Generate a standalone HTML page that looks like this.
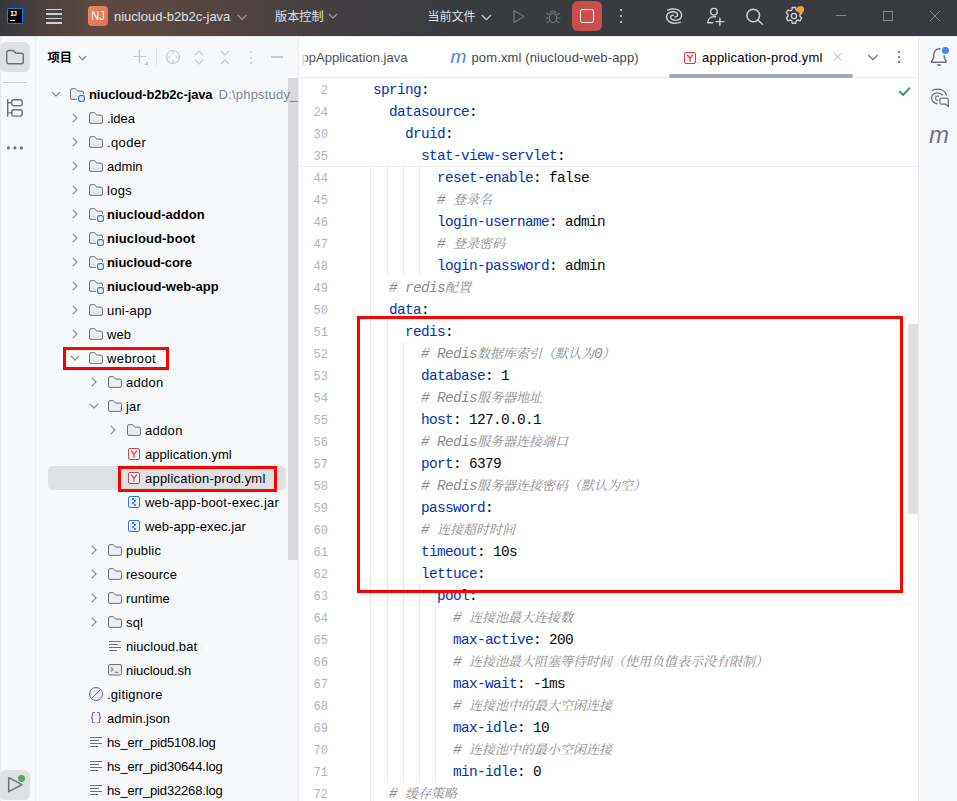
<!DOCTYPE html>
<html lang="zh"><head><meta charset="utf-8"><title>niucloud-b2b2c-java – application-prod.yml</title>
<style>
*{box-sizing:border-box;margin:0;padding:0}
html,body{width:957px;height:801px;overflow:hidden;background:#fff}
body{position:relative;font-family:"Liberation Sans","Noto Sans CJK SC",sans-serif;font-size:13px;color:#000}
.abs{position:absolute}
#title{left:0;top:0;width:957px;height:36px;background:linear-gradient(90deg,#38383c 0px,#4b413f 40px,#5e493f 95px,#5a4740 160px,#4d4241 260px,#403e42 360px,#393b40 450px,#393b40 957px);color:#dfe1e5}
#title .t{position:absolute;top:0;line-height:34px;font-size:13px;white-space:nowrap;color:#dfe1e5}
#lstripe{left:0;top:36px;width:36px;height:765px;background:#f7f8fa;border-right:1px solid #ebecf0}
#proj{left:36px;top:36px;width:262px;height:765px;background:#f7f8fa;overflow:hidden}
#projborder{left:298px;top:36px;width:1px;height:765px;background:#ebecf0}
#editor{left:299px;top:36px;width:619px;height:765px;background:#fff;overflow:hidden}
#rstripe{left:918px;top:36px;width:39px;height:765px;background:#f7f8fa;border-left:1px solid #ebecf0}
.row{position:absolute;left:0;height:24px;line-height:23px;white-space:nowrap;font-size:13px;color:#000}
.row b{font-weight:bold}
.ln{position:absolute;left:299px;width:29px;text-align:right;font-family:"Liberation Mono","Noto Sans CJK SC",monospace;font-size:12px;line-height:27px;height:22px;color:#aeb3c2}
.cl{position:absolute;font-family:"Liberation Mono","Noto Sans CJK SC",monospace;font-size:14.400px;letter-spacing:-.640px;line-height:25px;height:22px;white-space:pre;color:#080808}
.k{color:#0033b3}
.c{color:#8c8c8c;font-style:italic;font-family:"Liberation Mono","Noto Serif CJK SC",monospace}
.c i{font-size:13px;letter-spacing:0}
.guide{position:absolute;width:1px;background:#e6e7ec}
.red{position:absolute;border:3px solid #ff0000}
svg{position:absolute;overflow:visible}
</style></head>
<body>
<div id="title" class="abs">
<div class="abs" style="left:7px;top:8px;width:16px;height:16px;background:#000;border:1px solid #087cfa;border-radius:1px"></div>
<div class="abs" style="left:10px;top:10.500px;font:bold 7px/7px 'Liberation Mono',monospace;color:#fff;letter-spacing:-1.200px">IJ</div>
<div class="abs" style="left:10px;top:19.500px;width:5px;height:1.200px;background:#fff"></div>
<div class="abs" style="left:46px;top:8.5px;width:16px;height:1.500px;background:#ced0d6"></div>
<div class="abs" style="left:46px;top:13px;width:16px;height:1.500px;background:#ced0d6"></div>
<div class="abs" style="left:46px;top:17.5px;width:16px;height:1.500px;background:#ced0d6"></div>
<div class="abs" style="left:46px;top:22px;width:16px;height:1.500px;background:#ced0d6"></div>
<div class="abs" style="left:88px;top:6px;width:20px;height:20px;border-radius:4px;background:linear-gradient(135deg,#e98a63,#df7058)"></div>
<div class="abs" style="left:88px;top:6px;width:20px;height:20px;line-height:20px;text-align:center;font-size:13px;color:#fff;transform:scaleX(.85)">NJ</div>
<div class="t" style="left:114px">niucloud-b2b2c-java</div>
<svg style="left:236.500px;top:13.500px" width="11" height="7" viewBox="0 0 11 7"><path d="M.700 1l4.400 4.400 4.400-4.400" fill="none" stroke="#9da0a8" stroke-width="1.200"/></svg>
<div class="t" style="left:275px;font-size:12.200px;line-height:35.500px">版本控制</div>
<svg style="left:328px;top:13px" width="10" height="6" viewBox="0 0 10 6"><path d="M1 1l4 4 4-4" fill="none" stroke="#9da0a8" stroke-width="1.2"/></svg>
<div class="t" style="left:427.500px;font-size:12px;line-height:35.500px">当前文件</div>
<svg style="left:480.500px;top:13.500px" width="11" height="7" viewBox="0 0 11 7"><path d="M.700 1l4.600 4.600 4.600-4.600" fill="none" stroke="#ced0d6" stroke-width="1.200"/></svg>
<svg style="left:512px;top:9px" width="14" height="16" viewBox="0 0 14 16"><path d="M2 1.5v12l10-6z" fill="none" stroke="#6f737a" stroke-width="1.3" stroke-linejoin="round"/></svg>
<svg style="left:544px;top:8px" width="18" height="18" viewBox="0 0 18 18"><g fill="none" stroke="#6f737a" stroke-width="1.2"><ellipse cx="9" cy="10" rx="3.6" ry="4.6"/><path d="M6.5 5.5a2.5 2.5 0 015 0M1.5 10h4M12.500 10h4M2.5 5l3.300 2.300M15.500 5l-3.300 2.300M2.500 15l3.300-2.300M15.500 15l-3.300-2.300"/></g></svg>
<div class="abs" style="left:572px;top:1px;width:30px;height:30px;border-radius:6px;background:#c94f4f"></div>
<div class="abs" style="left:580px;top:9px;width:14px;height:14px;border-radius:2.500px;border:1.500px solid #fff"></div>
<div class="abs" style="left:620px;top:9px;width:2px;height:2px;border-radius:1px;background:#dfe1e5"></div>
<div class="abs" style="left:620px;top:15px;width:2px;height:2px;border-radius:1px;background:#dfe1e5"></div>
<div class="abs" style="left:620px;top:21px;width:2px;height:2px;border-radius:1px;background:#dfe1e5"></div>
<svg style="left:664px;top:6px" width="20" height="20" viewBox="0 0 20 20"><g fill="none" stroke="#ced0d6" stroke-width="1.500" stroke-linecap="round" transform="translate(10.100 10.070) scale(.940) translate(-10.100 -10.070)"><path d="M16.84 16.50C16.13 16.68 13.98 17.41 12.60 17.57C11.21 17.73 9.81 17.71 8.53 17.44C7.25 17.17 5.84 16.60 4.90 15.97C3.96 15.34 3.37 14.57 2.90 13.67C2.43 12.77 1.94 11.64 2.10 10.54C2.25 9.44 2.76 7.93 3.83 7.09C4.90 6.25 7.12 5.62 8.53 5.52C9.94 5.42 11.41 5.95 12.30 6.47C13.19 6.99 13.76 7.98 13.86 8.66C13.96 9.34 13.37 10.15 12.90 10.54C12.43 10.93 11.35 10.93 11.04 11.01"/><path d="M3.36 3.64C4.07 3.46 6.21 2.73 7.60 2.57C8.98 2.41 10.39 2.43 11.67 2.70C12.95 2.97 14.36 3.54 15.30 4.17C16.24 4.80 16.83 5.57 17.30 6.47C17.77 7.38 18.26 8.50 18.10 9.60C17.95 10.70 17.44 12.21 16.37 13.05C15.30 13.89 13.08 14.52 11.67 14.62C10.26 14.72 8.79 14.19 7.90 13.67C7.01 13.15 6.44 12.16 6.34 11.48C6.24 10.80 6.83 9.99 7.30 9.60C7.77 9.21 8.85 9.21 9.16 9.13"/></g></svg>
<svg style="left:704px;top:6px" width="22" height="22" viewBox="0 0 22 22"><g fill="none" stroke="#ced0d6" stroke-width="1.400" stroke-linecap="round" stroke-linejoin="round"><circle cx="9.900" cy="5.700" r="3.300"/><path d="M8.700 16.800H3.700c0-3.600 2.600-6 6.200-6h1.600"/><path d="M15.900 12.100v7.400M12.100 15.600h7.800"/></g></svg>
<svg style="left:744px;top:7px" width="20" height="20" viewBox="0 0 20 20"><g fill="none" stroke="#ced0d6" stroke-width="1.500" stroke-linecap="round"><circle cx="9.260" cy="8.470" r="6.300"/><path d="M13.800 13l4.600 4.200"/></g></svg>
<svg style="left:784px;top:6px" width="20" height="20" viewBox="0 0 20 20"><g fill="none" stroke="#ced0d6" stroke-width="1.400" stroke-linejoin="round"><path d="M8.300 1.500h3.400l.5 2.400 1.500.9 2.300-.8 1.700 2.900-1.800 1.600v1.800l1.800 1.600-1.700 2.900-2.300-.8-1.500.9-.5 2.400H8.300l-.5-2.400-1.500-.9-2.300.8-1.700-2.900 1.800-1.600V8.500L2.300 6.900 4 4l2.300.8 1.500-.9z"/><circle cx="10" cy="10" r="2.600"/></g></svg>
<div class="abs" style="left:797px;top:6px;width:7px;height:7px;border-radius:4px;background:#f2a337"></div>
<div class="abs" style="left:836px;top:15px;width:10px;height:1px;background:#85888f"></div>
<div class="abs" style="left:883px;top:11px;width:10px;height:10px;border:1px solid #85888f"></div>
<svg style="left:930px;top:11px" width="10" height="10" viewBox="0 0 10 10"><path d="M0 0l10 10M10 0l-10 10" stroke="#85888f" stroke-width="1"/></svg>
</div>
<div class="abs" style="left:0;top:36px;width:957px;height:1px;background:#ebecf0;z-index:3"></div>
<div id="lstripe" class="abs"></div>
<div class="abs" style="left:0;top:36px;width:2px;height:765px;background:linear-gradient(90deg,#e6e7ea,#f7f8fa)"></div>
<div class="abs" style="left:0;top:42px;width:30px;height:30px;border-radius:6px;background:#dfe0e4"></div>
<svg style="left:5px;top:49px" width="20" height="16" viewBox="0 0 20 16"><path d="M1.700 3.500a2 2 0 012-2h4c.6 0 1.100.300 1.500.700l1.700 2h5.400a2 2 0 012 2v6.600a2 2 0 01-2 2h-12.600a2 2 0 01-2-2z" fill="none" stroke="#6c707e" stroke-width="1.400" stroke-linejoin="round"/></svg>
<div class="abs" style="left:3px;top:82px;width:24px;height:1px;background:#c9ccd6"></div>
<svg style="left:6px;top:98px" width="18" height="20" viewBox="0 0 18 20"><g fill="none" stroke="#6c707e" stroke-width="1.400"><path d="M1.700 1.060v17.740"/><rect x="5.800" y="1.760" width="10.400" height="6.040" rx="2"/><rect x="5.800" y="11.800" width="10.400" height="6.300" rx="2"/><path d="M1.700 4.800h4.100M1.700 14.900h4.100"/></g></svg>
<svg style="left:0;top:140px" width="36" height="16" viewBox="0 0 36 16"><g fill="#6c707e"><circle cx="8.500" cy="7.900" r="1.550"/><circle cx="14.900" cy="7.900" r="1.550"/><circle cx="21.500" cy="7.900" r="1.550"/></g></svg>
<div class="abs" style="left:0;top:770px;width:30px;height:30px;border-radius:6px;background:#dfe0e4"></div>
<svg style="left:7px;top:776px" width="17" height="18" viewBox="0 0 17 18"><path d="M1.700 1.700v14l13.300-7z" fill="none" stroke="#6c707e" stroke-width="1.500" stroke-linejoin="round"/></svg>
<div class="abs" style="left:18px;top:775px;width:7px;height:7px;border-radius:4px;background:#55a76a;border:0"></div>
<div id="proj" class="abs"></div><div id="projborder" class="abs"></div>
<div class="abs" style="left:47.500px;top:47px;font-size:12.200px;line-height:22px;font-weight:bold;color:#000">项目</div>
<svg style="left:78px;top:55px" width="9" height="6" viewBox="0 0 9 6"><path d="M.8 1l3.700 3.700L8.200 1" fill="none" stroke="#818594" stroke-width="1.100"/></svg>
<svg style="left:133px;top:50px" width="16" height="16" viewBox="0 0 16 16"><path d="M6.500 0v13M0 6.500h13" stroke="#c6c9d3" stroke-width="1.200" fill="none"/><path d="M15 11v4h-4z" fill="#c6c9d3"/></svg>
<div class="abs" style="left:156px;top:47px;width:1px;height:20px;background:#e3e4e8"></div>
<svg style="left:165px;top:49px" width="16" height="16" viewBox="0 0 16 16"><g fill="none" stroke="#c6c9d3" stroke-width="1.200"><circle cx="8" cy="8" r="6.500"/><path d="M8 1.500v3.500M8 11v3.500M1.500 8h3.500M11 8h3.500"/></g></svg>
<svg style="left:194px;top:50px" width="10" height="15" viewBox="0 0 10 15"><path d="M1 5l4-4 4 4M1 10l4 4 4-4" fill="none" stroke="#c6c9d3" stroke-width="1.200"/></svg>
<svg style="left:220px;top:50px" width="10" height="15" viewBox="0 0 10 15"><path d="M1 1l4 4 4-4M1 14l4-4 4 4" fill="none" stroke="#c6c9d3" stroke-width="1.200"/></svg>
<div class="abs" style="left:250px;top:51px;width:2.200px;height:2.200px;border-radius:1px;background:#c6c9d3"></div>
<div class="abs" style="left:250px;top:56.5px;width:2.200px;height:2.200px;border-radius:1px;background:#c6c9d3"></div>
<div class="abs" style="left:250px;top:62px;width:2.200px;height:2.200px;border-radius:1px;background:#c6c9d3"></div>
<div class="abs" style="left:270.800px;top:56.300px;width:12.500px;height:1.400px;background:#c6c9d3"></div>
<div class="abs" style="left:48px;top:466px;width:238px;height:24px;border-radius:5px;background:#dfe0e4"></div>
<div class="abs" style="left:0;top:0;width:298px;height:801px;overflow:hidden">
<div class="row" style="left:218.600px;top:83px;color:#818594;letter-spacing:.200px">D:\phpstudy_pro\WWW</div>
<svg style="left:51px;top:91px" width="10" height="6" viewBox="0 0 10 6"><path d="M.8.800L5 5 9.200.800" fill="none" stroke="#818594" stroke-width="1.100"/></svg>
<svg style="left:69px;top:86px" width="17" height="17" viewBox="0 0 17 17"><path d="M1.500 4.200a1.500 1.500 0 011.500-1.500h3.200c.5 0 .9.200 1.200.600l1.300 1.800h4.300a1.500 1.500 0 011.500 1.500v5.300a1.500 1.500 0 01-1.500 1.500h-10a1.500 1.500 0 01-1.500-1.500z" fill="#ebecf0" stroke="#6c707e" stroke-width="1"/><rect x="8" y="8" width="9" height="9" fill="#f7f8fa"/><rect x="9.600" y="9.600" width="5.800" height="5.800" rx="1.600" fill="#e7effd" stroke="#3574f0" stroke-width="1.200"/></svg>
<div class="row" style="left:89px;top:83px"><b style="letter-spacing:-0.116px">niucloud-b2b2c-java</b></div>
<svg style="left:72px;top:113px" width="6" height="10" viewBox="0 0 6 10"><path d="M.8.800L5 5 .8 9.200" fill="none" stroke="#818594" stroke-width="1.100"/></svg>
<svg style="left:88px;top:110px" width="17" height="17" viewBox="0 0 17 17"><path d="M1.500 4.200a1.500 1.500 0 011.500-1.500h3.200c.5 0 .9.200 1.200.600l1.300 1.800h4.300a1.500 1.500 0 011.500 1.500v5.300a1.500 1.500 0 01-1.500 1.500h-10a1.500 1.500 0 01-1.500-1.500z" fill="#ebecf0" stroke="#6c707e" stroke-width="1"/></svg>
<div class="row" style="left:107px;top:107px"><span style="letter-spacing:-0.081px">.idea</span></div>
<svg style="left:72px;top:137px" width="6" height="10" viewBox="0 0 6 10"><path d="M.8.800L5 5 .8 9.200" fill="none" stroke="#818594" stroke-width="1.100"/></svg>
<svg style="left:88px;top:134px" width="17" height="17" viewBox="0 0 17 17"><path d="M1.500 4.200a1.500 1.500 0 011.500-1.500h3.200c.5 0 .9.200 1.200.600l1.300 1.800h4.300a1.500 1.500 0 011.500 1.500v5.300a1.500 1.500 0 01-1.500 1.500h-10a1.500 1.500 0 01-1.500-1.500z" fill="#ebecf0" stroke="#6c707e" stroke-width="1"/></svg>
<div class="row" style="left:107px;top:131px"><span style="letter-spacing:0.371px">.qoder</span></div>
<svg style="left:72px;top:161px" width="6" height="10" viewBox="0 0 6 10"><path d="M.8.800L5 5 .8 9.200" fill="none" stroke="#818594" stroke-width="1.100"/></svg>
<svg style="left:88px;top:158px" width="17" height="17" viewBox="0 0 17 17"><path d="M1.500 4.200a1.500 1.500 0 011.500-1.500h3.200c.5 0 .9.200 1.200.600l1.300 1.800h4.300a1.500 1.500 0 011.500 1.500v5.300a1.500 1.500 0 01-1.500 1.500h-10a1.500 1.500 0 01-1.500-1.500z" fill="#ebecf0" stroke="#6c707e" stroke-width="1"/></svg>
<div class="row" style="left:107px;top:155px"><span style="letter-spacing:0.036px">admin</span></div>
<svg style="left:72px;top:185px" width="6" height="10" viewBox="0 0 6 10"><path d="M.8.800L5 5 .8 9.200" fill="none" stroke="#818594" stroke-width="1.100"/></svg>
<svg style="left:88px;top:182px" width="17" height="17" viewBox="0 0 17 17"><path d="M1.500 4.200a1.500 1.500 0 011.500-1.500h3.200c.5 0 .9.200 1.200.600l1.300 1.800h4.300a1.500 1.500 0 011.500 1.500v5.300a1.500 1.500 0 01-1.500 1.500h-10a1.500 1.500 0 01-1.500-1.500z" fill="#ebecf0" stroke="#6c707e" stroke-width="1"/></svg>
<div class="row" style="left:107px;top:179px"><span style="letter-spacing:0.285px">logs</span></div>
<svg style="left:72px;top:209px" width="6" height="10" viewBox="0 0 6 10"><path d="M.8.800L5 5 .8 9.200" fill="none" stroke="#818594" stroke-width="1.100"/></svg>
<svg style="left:88px;top:206px" width="17" height="17" viewBox="0 0 17 17"><path d="M1.500 4.200a1.500 1.500 0 011.500-1.500h3.200c.5 0 .9.200 1.200.600l1.300 1.800h4.300a1.500 1.500 0 011.500 1.500v5.300a1.500 1.500 0 01-1.500 1.500h-10a1.500 1.500 0 01-1.500-1.500z" fill="#ebecf0" stroke="#6c707e" stroke-width="1"/><rect x="8" y="8" width="9" height="9" fill="#f7f8fa"/><rect x="9.600" y="9.600" width="5.800" height="5.800" rx="1.600" fill="#e7effd" stroke="#3574f0" stroke-width="1.200"/></svg>
<div class="row" style="left:107px;top:203px"><b style="letter-spacing:0.015px">niucloud-addon</b></div>
<svg style="left:72px;top:233px" width="6" height="10" viewBox="0 0 6 10"><path d="M.8.800L5 5 .8 9.200" fill="none" stroke="#818594" stroke-width="1.100"/></svg>
<svg style="left:88px;top:230px" width="17" height="17" viewBox="0 0 17 17"><path d="M1.500 4.200a1.500 1.500 0 011.500-1.500h3.200c.5 0 .9.200 1.200.600l1.300 1.800h4.300a1.500 1.500 0 011.500 1.500v5.300a1.500 1.500 0 01-1.500 1.500h-10a1.500 1.500 0 01-1.500-1.500z" fill="#ebecf0" stroke="#6c707e" stroke-width="1"/><rect x="8" y="8" width="9" height="9" fill="#f7f8fa"/><rect x="9.600" y="9.600" width="5.800" height="5.800" rx="1.600" fill="#e7effd" stroke="#3574f0" stroke-width="1.200"/></svg>
<div class="row" style="left:107px;top:227px"><b style="letter-spacing:0.12px">niucloud-boot</b></div>
<svg style="left:72px;top:257px" width="6" height="10" viewBox="0 0 6 10"><path d="M.8.800L5 5 .8 9.200" fill="none" stroke="#818594" stroke-width="1.100"/></svg>
<svg style="left:88px;top:254px" width="17" height="17" viewBox="0 0 17 17"><path d="M1.500 4.200a1.500 1.500 0 011.500-1.500h3.200c.5 0 .9.200 1.200.600l1.300 1.800h4.300a1.500 1.500 0 011.500 1.500v5.300a1.500 1.500 0 01-1.500 1.500h-10a1.500 1.500 0 01-1.500-1.500z" fill="#ebecf0" stroke="#6c707e" stroke-width="1"/><rect x="8" y="8" width="9" height="9" fill="#f7f8fa"/><rect x="9.600" y="9.600" width="5.800" height="5.800" rx="1.600" fill="#e7effd" stroke="#3574f0" stroke-width="1.200"/></svg>
<div class="row" style="left:107px;top:251px"><b style="letter-spacing:-0.073px">niucloud-core</b></div>
<svg style="left:72px;top:281px" width="6" height="10" viewBox="0 0 6 10"><path d="M.8.800L5 5 .8 9.200" fill="none" stroke="#818594" stroke-width="1.100"/></svg>
<svg style="left:88px;top:278px" width="17" height="17" viewBox="0 0 17 17"><path d="M1.500 4.200a1.500 1.500 0 011.500-1.500h3.200c.5 0 .9.200 1.200.600l1.300 1.800h4.300a1.500 1.500 0 011.500 1.500v5.300a1.500 1.500 0 01-1.500 1.500h-10a1.500 1.500 0 01-1.500-1.500z" fill="#ebecf0" stroke="#6c707e" stroke-width="1"/><rect x="8" y="8" width="9" height="9" fill="#f7f8fa"/><rect x="9.600" y="9.600" width="5.800" height="5.800" rx="1.600" fill="#e7effd" stroke="#3574f0" stroke-width="1.200"/></svg>
<div class="row" style="left:107px;top:275px"><b style="letter-spacing:0.036px">niucloud-web-app</b></div>
<svg style="left:72px;top:305px" width="6" height="10" viewBox="0 0 6 10"><path d="M.8.800L5 5 .8 9.200" fill="none" stroke="#818594" stroke-width="1.100"/></svg>
<svg style="left:88px;top:302px" width="17" height="17" viewBox="0 0 17 17"><path d="M1.500 4.200a1.500 1.500 0 011.500-1.500h3.200c.5 0 .9.200 1.200.600l1.300 1.800h4.300a1.500 1.500 0 011.500 1.500v5.300a1.500 1.500 0 01-1.500 1.500h-10a1.500 1.500 0 01-1.500-1.500z" fill="#ebecf0" stroke="#6c707e" stroke-width="1"/></svg>
<div class="row" style="left:107px;top:299px"><span style="letter-spacing:0.204px">uni-app</span></div>
<svg style="left:72px;top:329px" width="6" height="10" viewBox="0 0 6 10"><path d="M.8.800L5 5 .8 9.200" fill="none" stroke="#818594" stroke-width="1.100"/></svg>
<svg style="left:88px;top:326px" width="17" height="17" viewBox="0 0 17 17"><path d="M1.500 4.200a1.500 1.500 0 011.500-1.500h3.200c.5 0 .9.200 1.200.600l1.300 1.800h4.300a1.500 1.500 0 011.500 1.500v5.300a1.500 1.500 0 01-1.500 1.500h-10a1.500 1.500 0 01-1.500-1.500z" fill="#ebecf0" stroke="#6c707e" stroke-width="1"/></svg>
<div class="row" style="left:107px;top:323px"><span style="letter-spacing:0.047px">web</span></div>
<svg style="left:70px;top:355px" width="10" height="6" viewBox="0 0 10 6"><path d="M.8.800L5 5 9.200.800" fill="none" stroke="#818594" stroke-width="1.100"/></svg>
<svg style="left:88px;top:350px" width="17" height="17" viewBox="0 0 17 17"><path d="M1.500 4.200a1.500 1.500 0 011.500-1.500h3.200c.5 0 .9.200 1.200.600l1.300 1.800h4.300a1.500 1.500 0 011.500 1.500v5.300a1.500 1.500 0 01-1.500 1.500h-10a1.500 1.500 0 01-1.500-1.500z" fill="#ebecf0" stroke="#6c707e" stroke-width="1"/></svg>
<div class="row" style="left:107px;top:347px"><span style="letter-spacing:0.407px">webroot</span></div>
<svg style="left:91px;top:377px" width="6" height="10" viewBox="0 0 6 10"><path d="M.8.800L5 5 .8 9.200" fill="none" stroke="#818594" stroke-width="1.100"/></svg>
<svg style="left:107px;top:374px" width="17" height="17" viewBox="0 0 17 17"><path d="M1.500 4.200a1.500 1.500 0 011.500-1.500h3.200c.5 0 .9.200 1.200.600l1.300 1.800h4.300a1.500 1.500 0 011.500 1.500v5.300a1.500 1.500 0 01-1.500 1.500h-10a1.500 1.500 0 01-1.500-1.500z" fill="#ebecf0" stroke="#6c707e" stroke-width="1"/></svg>
<div class="row" style="left:126px;top:371px"><span style="letter-spacing:0.289px">addon</span></div>
<svg style="left:89px;top:403px" width="10" height="6" viewBox="0 0 10 6"><path d="M.8.800L5 5 9.200.800" fill="none" stroke="#818594" stroke-width="1.100"/></svg>
<svg style="left:107px;top:398px" width="17" height="17" viewBox="0 0 17 17"><path d="M1.500 4.200a1.500 1.500 0 011.500-1.500h3.200c.5 0 .9.200 1.200.600l1.300 1.800h4.300a1.500 1.500 0 011.500 1.500v5.300a1.500 1.500 0 01-1.500 1.500h-10a1.500 1.500 0 01-1.500-1.500z" fill="#ebecf0" stroke="#6c707e" stroke-width="1"/></svg>
<div class="row" style="left:126px;top:395px"><span style="letter-spacing:0.216px">jar</span></div>
<svg style="left:110px;top:425px" width="6" height="10" viewBox="0 0 6 10"><path d="M.8.800L5 5 .8 9.200" fill="none" stroke="#818594" stroke-width="1.100"/></svg>
<svg style="left:126px;top:422px" width="17" height="17" viewBox="0 0 17 17"><path d="M1.500 4.200a1.500 1.500 0 011.500-1.500h3.200c.5 0 .9.200 1.200.600l1.300 1.800h4.300a1.500 1.500 0 011.500 1.500v5.300a1.500 1.500 0 01-1.500 1.500h-10a1.500 1.500 0 01-1.500-1.500z" fill="#ebecf0" stroke="#6c707e" stroke-width="1"/></svg>
<div class="row" style="left:145px;top:419px"><span style="letter-spacing:0.309px">addon</span></div>
<div class="abs" style="left:128px;top:448px;width:12px;height:12px;border:1px solid #db3b4b;border-radius:2px;background:#fff2f3"></div><svg style="left:128px;top:448px" width="12" height="12" viewBox="0 0 12 12"><path d="M3 2.600L6 6.200 9 2.600M6 6.200V9.700" fill="none" stroke="#db3b4b" stroke-width="1.300"/></svg>
<div class="row" style="left:145px;top:443px"><span style="letter-spacing:0.053px">application.yml</span></div>
<div class="abs" style="left:128px;top:472px;width:12px;height:12px;border:1px solid #db3b4b;border-radius:2px;background:#fff2f3"></div><svg style="left:128px;top:472px" width="12" height="12" viewBox="0 0 12 12"><path d="M3 2.600L6 6.200 9 2.600M6 6.200V9.700" fill="none" stroke="#db3b4b" stroke-width="1.300"/></svg>
<div class="row" style="left:145px;top:467px"><span style="letter-spacing:0.208px">application-prod.yml</span></div>
<div class="abs" style="left:128px;top:496px;width:12px;height:12px;border:1px solid #3574f0;border-radius:2px;background:#e7effd"></div><svg style="left:128px;top:496px" width="12" height="12" viewBox="0 0 12 12"><g fill="#3574f0"><rect x="4.200" y="2" width="1.900" height="1.900"/><rect x="6" y="4" width="1.900" height="1.900"/><rect x="4.200" y="6" width="1.900" height="1.900"/><rect x="6" y="8" width="1.900" height="1.900"/></g></svg>
<div class="row" style="left:145px;top:491px"><span style="letter-spacing:0.221px">web-app-boot-exec.jar</span></div>
<div class="abs" style="left:128px;top:520px;width:12px;height:12px;border:1px solid #3574f0;border-radius:2px;background:#e7effd"></div><svg style="left:128px;top:520px" width="12" height="12" viewBox="0 0 12 12"><g fill="#3574f0"><rect x="4.200" y="2" width="1.900" height="1.900"/><rect x="6" y="4" width="1.900" height="1.900"/><rect x="4.200" y="6" width="1.900" height="1.900"/><rect x="6" y="8" width="1.900" height="1.900"/></g></svg>
<div class="row" style="left:145px;top:515px"><span style="letter-spacing:0.074px">web-app-exec.jar</span></div>
<svg style="left:91px;top:545px" width="6" height="10" viewBox="0 0 6 10"><path d="M.8.800L5 5 .8 9.200" fill="none" stroke="#818594" stroke-width="1.100"/></svg>
<svg style="left:107px;top:542px" width="17" height="17" viewBox="0 0 17 17"><path d="M1.500 4.200a1.500 1.500 0 011.500-1.500h3.200c.5 0 .9.200 1.200.600l1.300 1.800h4.300a1.500 1.500 0 011.500 1.500v5.300a1.500 1.500 0 01-1.500 1.500h-10a1.500 1.500 0 01-1.500-1.500z" fill="#ebecf0" stroke="#6c707e" stroke-width="1"/></svg>
<div class="row" style="left:126px;top:539px"><span style="letter-spacing:0.189px">public</span></div>
<svg style="left:91px;top:569px" width="6" height="10" viewBox="0 0 6 10"><path d="M.8.800L5 5 .8 9.200" fill="none" stroke="#818594" stroke-width="1.100"/></svg>
<svg style="left:107px;top:566px" width="17" height="17" viewBox="0 0 17 17"><path d="M1.500 4.200a1.500 1.500 0 011.500-1.500h3.200c.5 0 .9.200 1.200.600l1.300 1.800h4.300a1.500 1.500 0 011.500 1.500v5.300a1.500 1.500 0 01-1.500 1.500h-10a1.500 1.500 0 01-1.500-1.500z" fill="#ebecf0" stroke="#6c707e" stroke-width="1"/></svg>
<div class="row" style="left:126px;top:563px"><span style="letter-spacing:0.04px">resource</span></div>
<svg style="left:91px;top:593px" width="6" height="10" viewBox="0 0 6 10"><path d="M.8.800L5 5 .8 9.200" fill="none" stroke="#818594" stroke-width="1.100"/></svg>
<svg style="left:107px;top:590px" width="17" height="17" viewBox="0 0 17 17"><path d="M1.500 4.200a1.500 1.500 0 011.500-1.500h3.200c.5 0 .9.200 1.200.600l1.300 1.800h4.300a1.500 1.500 0 011.500 1.500v5.300a1.500 1.500 0 01-1.500 1.500h-10a1.500 1.500 0 01-1.500-1.500z" fill="#ebecf0" stroke="#6c707e" stroke-width="1"/></svg>
<div class="row" style="left:126px;top:587px"><span style="letter-spacing:0.077px">runtime</span></div>
<svg style="left:91px;top:617px" width="6" height="10" viewBox="0 0 6 10"><path d="M.8.800L5 5 .8 9.200" fill="none" stroke="#818594" stroke-width="1.100"/></svg>
<svg style="left:107px;top:614px" width="17" height="17" viewBox="0 0 17 17"><path d="M1.500 4.200a1.500 1.500 0 011.500-1.500h3.200c.5 0 .9.200 1.200.600l1.300 1.800h4.300a1.500 1.500 0 011.500 1.500v5.300a1.500 1.500 0 01-1.500 1.500h-10a1.500 1.500 0 01-1.500-1.500z" fill="#ebecf0" stroke="#6c707e" stroke-width="1"/></svg>
<div class="row" style="left:126px;top:611px"><span style="letter-spacing:0.158px">sql</span></div>
<svg style="left:109px;top:641px" width="13" height="11" viewBox="0 0 13 11" shape-rendering="crispEdges"><path d="M0 .500h12M0 3.500h8.500M0 6.500h12M0 9.500h8" stroke="#6c707e" stroke-width="1" fill="none"/></svg>
<div class="row" style="left:126px;top:635px"><span style="letter-spacing:0.09px">niucloud.bat</span></div>
<svg style="left:108px;top:664px" width="14" height="12" viewBox="0 0 14 12"><rect x=".500" y=".500" width="13" height="10.500" rx="1.500" fill="#ebecf0" stroke="#6c707e" stroke-width="1"/><path d="M2.800 3.600l2.200 1.900-2.200 1.900M6.500 8.200h3.800" fill="none" stroke="#6c707e" stroke-width="1.100"/></svg>
<div class="row" style="left:126px;top:659px"><span style="letter-spacing:-0.053px">niucloud.sh</span></div>
<svg style="left:89px;top:687px" width="14" height="14" viewBox="0 0 14 14"><circle cx="7" cy="7" r="6.500" fill="#ebecf0" stroke="#6c707e" stroke-width="1"/><path d="M2.500 11.500L11.500 2.500" stroke="#6c707e" stroke-width="1"/></svg>
<div class="row" style="left:107px;top:683px"><span style="letter-spacing:0.222px">.gitignore</span></div>
<svg style="left:90px;top:712px" width="12" height="12" viewBox="0 0 12 12"><path d="M5 .500h-1.200a1.500 1.500 0 00-1.500 1.500v2.300c0 .800-.500 1.300-1.400 1.300.900 0 1.400.500 1.400 1.300v2.300a1.500 1.500 0 001.500 1.500h1.200M7 .500h1.200a1.500 1.500 0 011.500 1.500v2.300c0 .800.500 1.300 1.400 1.300-.900 0-1.400.500-1.400 1.300v2.300a1.500 1.500 0 01-1.500 1.500h-1.200" fill="none" stroke="#834df0" stroke-width="1.100"/></svg>
<div class="row" style="left:107px;top:707px"><span style="letter-spacing:0.003px">admin.json</span></div>
<svg style="left:90px;top:737px" width="13" height="11" viewBox="0 0 13 11" shape-rendering="crispEdges"><path d="M0 .500h12M0 3.500h8.500M0 6.500h12M0 9.500h8" stroke="#6c707e" stroke-width="1" fill="none"/></svg>
<div class="row" style="left:107px;top:731px"><span style="letter-spacing:-0.145px">hs_err_pid5108.log</span></div>
<svg style="left:90px;top:761px" width="13" height="11" viewBox="0 0 13 11" shape-rendering="crispEdges"><path d="M0 .500h12M0 3.500h8.500M0 6.500h12M0 9.500h8" stroke="#6c707e" stroke-width="1" fill="none"/></svg>
<div class="row" style="left:107px;top:755px"><span style="letter-spacing:-0.155px">hs_err_pid30644.log</span></div>
<svg style="left:90px;top:785px" width="13" height="11" viewBox="0 0 13 11" shape-rendering="crispEdges"><path d="M0 .500h12M0 3.500h8.500M0 6.500h12M0 9.500h8" stroke="#6c707e" stroke-width="1" fill="none"/></svg>
<div class="row" style="left:107px;top:779px"><span style="letter-spacing:-0.155px">hs_err_pid32268.log</span></div>
</div>
<div class="abs" style="left:288px;top:78px;width:10px;height:482px;background:rgba(0,0,0,.120)"></div>
<div class="red" style="left:63px;top:347px;width:106px;height:23px"></div>
<div class="red" style="left:118px;top:466px;width:159px;height:26px"></div>
<div id="editor" class="abs"></div>
<div class="abs" style="left:299px;top:77px;width:619px;height:1px;background:#ebecf0"></div>
<div class="abs" style="left:299px;top:36px;width:360px;height:41px;overflow:hidden"><div class="abs" style="left:2.500px;top:12px;font-size:13px;line-height:20px;color:#4e5160;white-space:nowrap;letter-spacing:.030px">ppApplication.java</div><div class="abs" style="left:0;top:0;width:9px;height:40px;background:linear-gradient(90deg,#fff 25%,rgba(255,255,255,0))"></div></div>
<div class="abs" style="left:450.500px;top:45px;font:italic 19px/24px 'Liberation Sans',sans-serif;color:#4d82f3">m</div>
<div class="abs" style="left:471.500px;top:48px;font-size:13px;line-height:20px;color:#43454f;white-space:nowrap;letter-spacing:0.122px">pom.xml (niucloud-web-app)</div>
<div class="abs" style="left:684px;top:52px;width:12px;height:12px;border:1px solid #db3b4b;border-radius:2px;background:#fff2f3"></div><svg style="left:684px;top:52px" width="12" height="12" viewBox="0 0 12 12"><path d="M3 2.600L6 6.200 9 2.600M6 6.200V9.700" fill="none" stroke="#db3b4b" stroke-width="1.300"/></svg>
<div class="abs" style="left:702px;top:48px;font-size:13px;line-height:20px;color:#000;white-space:nowrap;letter-spacing:0.218px">application-prod.yml</div>
<svg style="left:834.300px;top:53.200px" width="7.400" height="7.400" viewBox="0 0 7.400 7.400"><path d="M0 0l7.400 7.400M7.400 0l-7.400 7.400" stroke="#a8adbd" stroke-width="1"/></svg>
<div class="abs" style="left:669px;top:74px;width:184px;height:4px;border-radius:2px;background:#a3a9bd"></div>
<svg style="left:867px;top:53.500px" width="12" height="7" viewBox="0 0 12 7"><path d="M1.300 1l4.700 4.700 4.700-4.700" fill="none" stroke="#6c707e" stroke-width="1.200"/></svg>
<div class="abs" style="left:898px;top:51px;width:2px;height:2px;border-radius:.500px;background:#6c707e"></div>
<div class="abs" style="left:898px;top:56px;width:2px;height:2px;border-radius:.500px;background:#6c707e"></div>
<div class="abs" style="left:898px;top:61px;width:2px;height:2px;border-radius:.500px;background:#6c707e"></div>
<svg style="left:898px;top:86px" width="14" height="11" viewBox="0 0 14 11"><path d="M1.200 5.300L5.100 8.900 12 1.600" fill="none" stroke="#369650" stroke-width="1.900"/></svg>
<div class="abs" style="left:299px;top:166px;width:619px;height:1px;background:#ebecf0"></div>
<div class="guide" style="left:370px;top:166px;height:635px"></div>
<div class="guide" style="left:387px;top:166px;height:110px"></div>
<div class="guide" style="left:403px;top:166px;height:110px"></div>
<div class="guide" style="left:419px;top:166px;height:110px"></div>
<div class="guide" style="left:387px;top:320px;height:462px"></div>
<div class="guide" style="left:403px;top:342px;height:440px"></div>
<div class="guide" style="left:419px;top:584px;height:198px"></div>
<div class="guide" style="left:435px;top:606px;height:176px"></div>
<div class="ln" style="top:78px">2</div>
<div class="cl" style="left:373px;top:78px"><span class="k">spring</span>:</div>
<div class="ln" style="top:100px">24</div>
<div class="cl" style="left:389px;top:100px"><span class="k">datasource</span>:</div>
<div class="ln" style="top:122px">30</div>
<div class="cl" style="left:405px;top:122px"><span class="k">druid</span>:</div>
<div class="ln" style="top:144px">35</div>
<div class="cl" style="left:421px;top:144px"><span class="k">stat-view-servlet</span>:</div>
<div class="ln" style="top:166px">44</div>
<div class="cl" style="left:437px;top:166px"><span class="k">reset-enable</span>: false</div>
<div class="ln" style="top:188px">45</div>
<div class="cl" style="left:437px;top:188px"><span class="c"># <i>登录名</i></span></div>
<div class="ln" style="top:210px">46</div>
<div class="cl" style="left:437px;top:210px"><span class="k">login-username</span>: admin</div>
<div class="ln" style="top:232px">47</div>
<div class="cl" style="left:437px;top:232px"><span class="c"># <i>登录密码</i></span></div>
<div class="ln" style="top:254px">48</div>
<div class="cl" style="left:437px;top:254px"><span class="k">login-password</span>: admin</div>
<div class="ln" style="top:276px">49</div>
<div class="cl" style="left:389px;top:276px"><span class="c"># redis<i>配置</i></span></div>
<div class="ln" style="top:298px">50</div>
<div class="cl" style="left:389px;top:298px"><span class="k">data</span>:</div>
<div class="ln" style="top:320px">51</div>
<div class="cl" style="left:405px;top:320px"><span class="k">redis</span>:</div>
<div class="ln" style="top:342px">52</div>
<div class="cl" style="left:421px;top:342px"><span class="c"># Redis<i>数据库索引（默认为</i>0<i>）</i></span></div>
<div class="ln" style="top:364px">53</div>
<div class="cl" style="left:421px;top:364px"><span class="k">database</span>: 1</div>
<div class="ln" style="top:386px">54</div>
<div class="cl" style="left:421px;top:386px"><span class="c"># Redis<i>服务器地址</i></span></div>
<div class="ln" style="top:408px">55</div>
<div class="cl" style="left:421px;top:408px"><span class="k">host</span>: 127.0.0.1</div>
<div class="ln" style="top:430px">56</div>
<div class="cl" style="left:421px;top:430px"><span class="c"># Redis<i>服务器连接端口</i></span></div>
<div class="ln" style="top:452px">57</div>
<div class="cl" style="left:421px;top:452px"><span class="k">port</span>: 6379</div>
<div class="ln" style="top:474px">58</div>
<div class="cl" style="left:421px;top:474px"><span class="c"># Redis<i>服务器连接密码（默认为空）</i></span></div>
<div class="ln" style="top:496px">59</div>
<div class="cl" style="left:421px;top:496px"><span class="k">password</span>:</div>
<div class="ln" style="top:518px">60</div>
<div class="cl" style="left:421px;top:518px"><span class="c"># <i>连接超时时间</i></span></div>
<div class="ln" style="top:540px">61</div>
<div class="cl" style="left:421px;top:540px"><span class="k">timeout</span>: 10s</div>
<div class="ln" style="top:562px">62</div>
<div class="cl" style="left:421px;top:562px"><span class="k">lettuce</span>:</div>
<div class="ln" style="top:584px">63</div>
<div class="cl" style="left:437px;top:584px"><span class="k">pool</span>:</div>
<div class="ln" style="top:606px">64</div>
<div class="cl" style="left:453px;top:606px"><span class="c"># <i>连接池最大连接数</i></span></div>
<div class="ln" style="top:628px">65</div>
<div class="cl" style="left:453px;top:628px"><span class="k">max-active</span>: 200</div>
<div class="ln" style="top:650px">66</div>
<div class="cl" style="left:453px;top:650px"><span class="c"># <i>连接池最大阻塞等待时间（使用负值表示没有限制）</i></span></div>
<div class="ln" style="top:672px">67</div>
<div class="cl" style="left:453px;top:672px"><span class="k">max-wait</span>: -1ms</div>
<div class="ln" style="top:694px">68</div>
<div class="cl" style="left:453px;top:694px"><span class="c"># <i>连接池中的最大空闲连接</i></span></div>
<div class="ln" style="top:716px">69</div>
<div class="cl" style="left:453px;top:716px"><span class="k">max-idle</span>: 10</div>
<div class="ln" style="top:738px">70</div>
<div class="cl" style="left:453px;top:738px"><span class="c"># <i>连接池中的最小空闲连接</i></span></div>
<div class="ln" style="top:760px">71</div>
<div class="cl" style="left:453px;top:760px"><span class="k">min-idle</span>: 0</div>
<div class="ln" style="top:782px">72</div>
<div class="cl" style="left:389px;top:782px"><span class="c"># <i>缓存策略</i></span></div>
<div class="abs" style="left:908px;top:324px;width:10px;height:190px;background:#e1e1e2"></div>
<div class="red" style="left:357px;top:316px;width:546px;height:277px"></div>
<div id="rstripe" class="abs"></div>
<svg style="left:925px;top:42px" width="30" height="28" viewBox="0 0 30 28"><path d="M15.500 6.800h-1.200a5.500 5.500 0 00-5.500 5.500v2c0 1.500-.600 2.500-1.300 3.600l-.900 1.400c-.300.500 0 1 .600 1h13.500c.600 0 .900-.500.600-1l-.900-1.400c-.700-1.100-1.200-2.200-1.200-3.600v-1" fill="none" stroke="#6c707e" stroke-width="1.400" stroke-linecap="butt" stroke-linejoin="round"/><path d="M11.900 22.200a2.100 1.900 0 004.200 0z" fill="#6c707e"/><circle cx="20.450" cy="8.570" r="3.500" fill="#4d82f3"/></svg>
<svg style="left:925px;top:84px" width="30" height="28" viewBox="0 0 30 28"><g fill="none" stroke="#6c707e" stroke-width="1.250" stroke-linecap="round" stroke-linejoin="round"><path d="M7.170 6.470C9 5.600 10.500 5.240 12.240 5.240c2 0 3.800.350 5.240 1.050 1.500.800 2.500 1.700 3.150 2.800.350.700.600 1.400.700 2.100"/><path d="M17.310 11.010c-.800-.800-1.700-1.400-2.620-1.740-1-.350-2.100-.500-3.150-.350-1.400.200-2.700.700-3.500 1.570-.800.800-1.300 1.900-1.400 3.150-.100 1.100.200 2.200.880 3.140.600.850 1.400 1.550 2.270 2.100.800.500 1.600.800 2.450 1.050"/><path d="M13.460 12.060c-.700-.100-1.400 0-1.920.180-.600.350-1 .900-1.050 1.750-.050.600.200 1.150.700 1.570.300.300.650.500 1.050.700"/><path d="M16.500 14H21.650a1.600 1.600 0 011.600 1.600V22.400L20.300 20.100H16.500a1.600 1.600 0 01-1.600-1.600V15.600a1.600 1.600 0 011.600-1.600z"/></g></svg>
<div class="abs" style="left:929px;top:122.500px;font:italic 24px/24px 'Liberation Sans',sans-serif;color:#6c707e">m</div>
</body></html>
